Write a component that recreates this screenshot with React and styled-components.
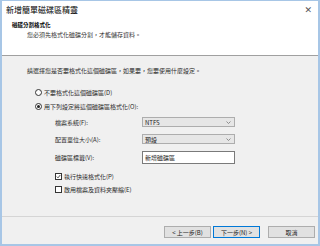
import React from "react";
import styled, { createGlobalStyle } from "styled-components";

const Global = createGlobalStyle`
  html, body { margin: 0; padding: 0; background: #ffffff; }
  body {
    font-family: "Noto Sans CJK TC", "Noto Sans", "Liberation Sans", sans-serif;
    color: #1a1a1a;
  }
`;

const Window = styled.div`
  width: 320px;
  height: 246px;
  box-sizing: border-box;
  border: 1px solid #a7c6e6;
  border-left-width: 2px;
  border-right-width: 2px;
  border-bottom-width: 2px;
  display: flex;
  flex-direction: column;
  background: #f0f0f0;
  overflow: hidden;
`;

const TitleBar = styled.div`
  height: 18px;
  display: flex;
  align-items: center;
  justify-content: space-between;
  padding: 0 6px 0 4px;
  background: #ffffff;
`;

const Title = styled.span`
  font-size: 8px;
  line-height: 1;
  color: #000;
`;

const Close = styled.span`
  font-size: 9px;
  line-height: 1;
  color: #555;
  font-family: "DejaVu Sans", sans-serif;
`;

const Header = styled.div`
  height: 33px;
  background: #ffffff;
  border-bottom: 1px solid #a0a0a0;
  padding: 3px 0 0 10px;
  display: flex;
  flex-direction: column;
  gap: 4px;
`;

const HeaderTitle = styled.div`
  font-size: 5.5px;
  font-weight: bold;
  line-height: 6px;
  color: #000;
`;

const HeaderSub = styled.div`
  font-size: 6px;
  line-height: 6px;
  padding-left: 15px;
  color: #333;
`;

const Body = styled.div`
  flex: 1;
  padding: 11px 0 0 25px;
  display: flex;
  flex-direction: column;
`;

const Text = styled.div`
  font-size: 6px;
  line-height: 7px;
  color: #2a2a2a;
  margin-left: ${(p) => p.indent || 0}px;
  margin-bottom: ${(p) => p.gap || 0}px;
`;

const Choice = styled.label`
  display: flex;
  align-items: center;
  gap: 2px;
  height: 9px;
  font-size: 6px;
  color: #2a2a2a;
  margin-left: ${(p) => p.indent || 0}px;
  margin-top: ${(p) => p.top || 0}px;
`;

const Radio = styled.span`
  width: 5px;
  height: 5px;
  border-radius: 50%;
  border: 1px solid #333;
  background: #fff;
  display: flex;
  align-items: center;
  justify-content: center;
  &::after {
    content: "";
    width: 3px;
    height: 3px;
    border-radius: 50%;
    background: ${(p) => (p.on ? "#222" : "transparent")};
  }
`;

const Check = styled.span`
  width: 5px;
  height: 5px;
  border: 1px solid #333;
  background: #fff;
  display: flex;
  align-items: center;
  justify-content: center;
`;

const Form = styled.div`
  margin-left: 28px;
  margin-top: 6px;
  display: grid;
  grid-template-columns: 87px 93px;
  row-gap: 7px;
  align-items: center;
`;

const Label = styled.span`
  font-size: 6px;
  color: #2a2a2a;
`;

const Select = styled.div`
  height: 10px;
  box-sizing: border-box;
  border: 1px solid #adadad;
  background: #e6e6e6;
  display: flex;
  align-items: center;
  justify-content: space-between;
  padding: 0 3px 0 2px;
  font-size: 6px;
  color: #222;
`;

const Input = styled.div`
  height: 13px;
  box-sizing: border-box;
  border: 1px solid #7a7a7a;
  background: #fff;
  display: flex;
  align-items: center;
  padding-left: 2px;
  font-size: 6px;
  color: #222;
`;

const Footer = styled.div`
  height: 28px;
  box-sizing: border-box;
  border-top: 1px solid #d5d5d5;
  display: flex;
  align-items: flex-start;
  justify-content: flex-end;
  padding: 9px 3px 0 0;
  gap: 2px;
`;

const Button = styled.div`
  width: 47px;
  height: 12px;
  box-sizing: border-box;
  border: 1px solid ${(p) => (p.primary ? "#0078d7" : "#adadad")};
  background: #e1e1e1;
  display: flex;
  align-items: center;
  justify-content: center;
  font-size: 6px;
  color: #222;
  margin-left: ${(p) => p.space || 0}px;
`;

const Chevron = () => (
  <svg width="5" height="3" viewBox="0 0 5 3">
    <path d="M0.5 0.5 L2.5 2.5 L4.5 0.5" fill="none" stroke="#777" strokeWidth="0.8" />
  </svg>
);

export default function App() {
  return (
    <>
      <Global />
      <Window>
        <TitleBar>
          <Title>新增簡單磁碟區精靈</Title>
          <Close>✕</Close>
        </TitleBar>
        <Header>
          <HeaderTitle>磁碟分割格式化</HeaderTitle>
          <HeaderSub>您必須先格式化磁碟分割，才能儲存資料。</HeaderSub>
        </Header>
        <Body>
          <Text gap={14}>請選擇您是否要格式化這個磁碟區，如果要，您要使用什麼設定。</Text>
          <Choice indent={8}>
            <Radio />
            不要格式化這個磁碟區(D)
          </Choice>
          <Choice indent={8} top={5}>
            <Radio on />
            用下列設定將這個磁碟區格式化(O):
          </Choice>
          <Form>
            <Label>檔案系統(F):</Label>
            <Select>
              NTFS
              <Chevron />
            </Select>
            <Label>配置單位大小(A):</Label>
            <Select>
              預設
              <Chevron />
            </Select>
            <Label>磁碟區標籤(V):</Label>
            <Input>新增磁碟區</Input>
          </Form>
          <Choice indent={28} top={8}>
            <Check>
              <svg width="5" height="5" viewBox="0 0 5 5">
                <path d="M0.8 2.6 L2 3.8 L4.3 1" fill="none" stroke="#222" strokeWidth="0.8" />
              </svg>
            </Check>
            執行快速格式化(P)
          </Choice>
          <Choice indent={28} top={4}>
            <Check />
            啟用檔案及資料夾壓縮(E)
          </Choice>
        </Body>
        <Footer>
          <Button>&lt; 上一步(B)</Button>
          <Button primary>下一步(N) &gt;</Button>
          <Button space={6}>取消</Button>
        </Footer>
      </Window>
    </>
  );
}
